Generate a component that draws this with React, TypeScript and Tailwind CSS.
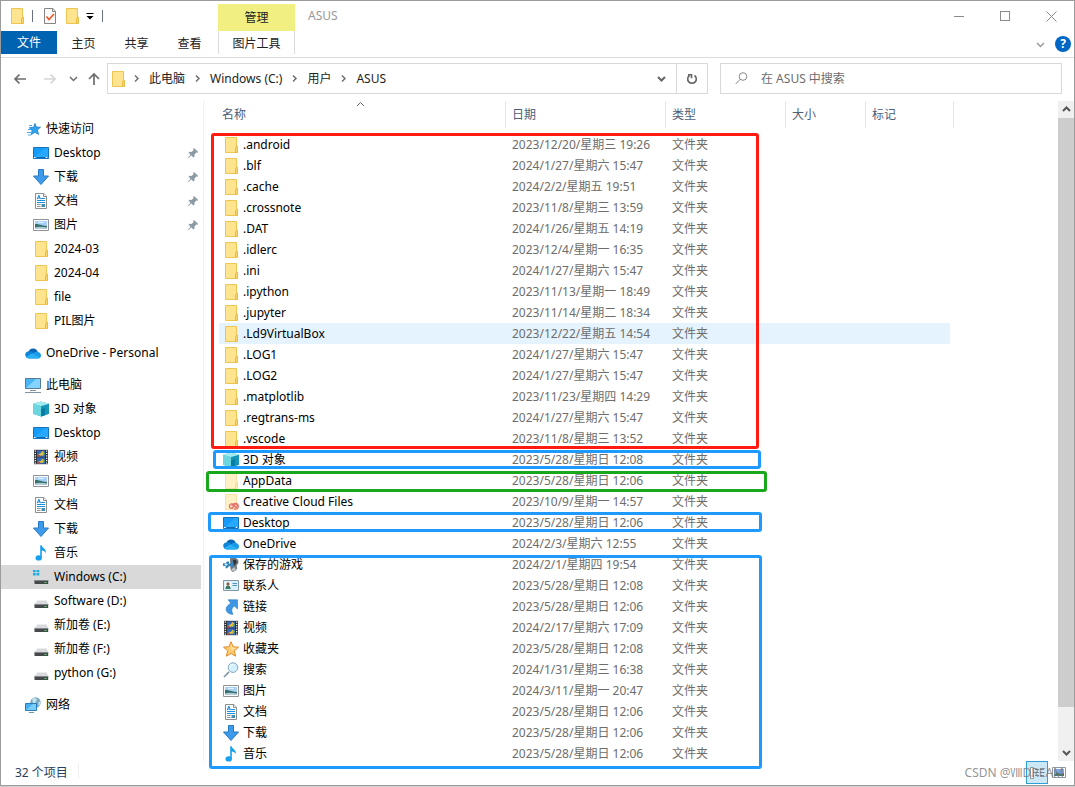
import { useState } from 'react';
import type { ReactNode } from 'react';

type IconName =
  | 'folder' | 'folderFaded' | 'creative' | 'desktop' | 'download' | 'document' | 'picture' | 'cube' | 'video'
  | 'music' | 'cloud' | 'pc' | 'network' | 'star' | 'favorite' | 'systemDrive' | 'drive' | 'games' | 'contact'
  | 'link' | 'search';

const folder = (
  <>
    <path d="M2.5.5h11v15h-11z" fill="#ffe48f" stroke="#efc552" />
    <path d="M12.5 15.5v-4.600q0-.7.7-1.100l1.300-.6v6.300z" fill="#fbd667" stroke="#e5b73f" strokeWidth=".9" />
  </>
);

const drive = (
  <>
    <path d="M4.3 7.5h9.4l1.5 3.5H1.8z" fill="#d8dadc" />
    <path d="M1.5 11h13.7v4H1.5z" fill="#46494c" />
    <path d="M1.5 11h13.7v1H1.5z" fill="#85888b" />
    <path d="M11.5 13h2v1h-2z" fill="#3be54b" />
  </>
);

const icons: Record<IconName, ReactNode> = {
  folder,
  folderFaded: <g opacity=".5">{folder}</g>,
  creative: (
    <>
      <g opacity=".5">{folder}</g>
      <path d="M8.2 14.4a2.3 2.3 0 0 1 0-4.5c2.2-.4 3.4 3.9 5.2 3.4 1.7-.5 1.3-3.4-.8-3.2-2 .2-1.9 4.3-4.4 4.3Z" fill="none" stroke="#e4716c" strokeWidth="1.4" />
      <path d="M8.7 12.2c1.2-4 6.6-3.8 6.7.2 0 2.5-2.4 3-4.5 2.5" fill="none" stroke="#e4716c" strokeWidth="1.1" />
    </>
  ),
  desktop: (
    <>
      <path d="M.5 2.5h15v11H.5z" fill="#159cf8" stroke="#1674bd" />
      <path d="m1 13 11-10h3v10z" fill="#27a9ff" />
      <path d="M1 12.5h1.5M13 12.5h1" stroke="#fff" />
      <path d="M3.5 12.5H12" stroke="#0d6bb5" />
    </>
  ),
  download: <path d="M5.5.5h5V7h5L8 15.5.5 7h5z" fill="#3d9bea" stroke="#2679c4" />,
  document: (
    <>
      <path d="M2.5.5h8.3l2.7 2.7v12.3h-11z" fill="#fff" stroke="#8b8d8f" />
      <path d="M10.5.5v3h3" fill="#eee" stroke="#8b8d8f" />
      <path d="m4.2 6.2 1.7-4 1.6 4M5 5h2" stroke="#1487da" fill="none" />
      <path d="M8 5.5h4M4 7.5h8M4 9.5h8" stroke="#1c8fe0" />
      <path d="M4 11.5h3.5M4 13.5h3.5" stroke="#8a949b" />
      <path d="M8.500 11H12v3H8.500z" fill="#3f8fb8" />
    </>
  ),
  picture: (
    <>
      <path d="M.5 2.5h15v11H.5z" fill="#fff" stroke="#909497" />
      <path d="M2 4h12v8H2z" fill="#a9d0f6" />
      <path d="M2 7c3-.5 5 1 12 2v3H2z" fill="#36716b" />
      <path d="M2 10.5c4-1.5 8-.5 12 0V12H2z" fill="#b3cbd8" />
      <path d="M5 5.5h6" stroke="#e2f1ff" />
    </>
  ),
  cube: (
    <>
      <path d="m8 .5 8 2.3v10L8 15.6 0 12.8v-10z" fill="#35bac9" />
      <path d="M0 2.8 8 5v10.6l-8-2.8z" fill="#6bd6df" />
      <path d="M8 5l8-2.200v10l-8 2.800z" fill="#1596b6" />
      <path d="M0 2.800 8 .5l8 2.300L8 5z" fill="#a5ebee" />
      <path d="M8 8.5 12 7v7.2l-4 1.4z" fill="#087ca5" />
    </>
  ),
  video: (
    <>
      <path d="M1 .8h14v14.4H1z" fill="#313438" />
      <path d="M2.3 1.5v13.3M13.7 1.5v13.3" stroke="#fff" strokeWidth="1.2" strokeDasharray="1.2 1.2" />
      <path d="M4 1.5h8v6.2H4zM4 8.5h8v6.2H4z" fill="#3568bb" />
      <path d="M5 6.8C5.5 4 9 5 9 2l2 1-.5 3.5zM5 13.8c1-2.5 4-1 4-4l2 1-.5 3z" fill="#edc23c" />
      <path d="M4 6h3v1.7H4zM4 13h3v1.7H4z" fill="#b84f43" />
      <path d="m9 4.8 3-1v1.6zM8.5 12l3.5-1v1.6z" fill="#50a653" />
    </>
  ),
  music: (
    <>
      <path d="M7.2.3h1.5c.3 2.8 4.8 3.2 4.1 7.900-.9-1.900-2.100-2.700-4-2.800v7.200H7.2z" fill="#16a0ed" />
      <ellipse cx="5.7" cy="12.9" rx="3.2" ry="2.7" fill="#16a0ed" />
    </>
  ),
  cloud: (
    <>
      <path d="M3.5 6.5A5 5 0 0 1 12.8 7L8 10.5z" fill="#0866b9" />
      <path d="M.8 11.6c-1.600-2.600.3-5.300 3.400-5.300 1.700 0 2.800.8 4.100 1.700l-6.200 5z" fill="#1085d7" />
      <path d="M8.7 7.8c2.6-2 7.3-.9 7.3 2.6 0 1.8-1.2 3-2.8 3H3.8c-1.2 0-2-.5-2.7-1.3z" fill="#199be9" />
      <path d="m1.1 12.1 6-3.5 7.7 4c-.5.5-1 .8-1.6.8H3.8c-1.2 0-2-.5-2.7-1.3z" fill="#2aaef4" />
    </>
  ),
  pc: (
    <>
      <path d="M.5 1.5h15v10H.5z" fill="#4ab5f5" stroke="#567b94" />
      <path d="m1 11 10-9h4v9z" fill="#83d2ff" />
      <path d="M5 13.5h6M0 15.500h16" stroke="#8192a0" />
    </>
  ),
  network: (
    <>
      <circle cx="10.5" cy="5.5" r="5.2" fill="#7aa9bf" />
      <path d="M7 2c3-2.4 6 .2 4.3 2.2-1.2 1-.4 2.2-2.3 2.2S8 4 7 2zM13.5 5l2-.5c.2 2-.6 3.7-2 4.8z" fill="#c3e3ec" />
      <path d="M.5 6.5h11v7H.5z" fill="#49aef0" stroke="#287cba" />
      <path d="m1 13 7-6h3v6z" fill="#7accfa" />
      <path d="M4 15.500h5" stroke="#7895a9" />
    </>
  ),
  star: (
    <>
      <path d="m10 2.500 1.300 3.600 4.200.1-3.100 2.700 1.100 4.500L10 11.300l-3.700 2.200.8-4.100-2.800-2.600 4.200-.5z" fill="#31a3ec" stroke="#1780cf" strokeWidth=".8" />
      <path d="M4 4.500h3M3 8.500h3M2 11.500h4M3 14h3" stroke="#35a4eb" strokeWidth=".9" />
    </>
  ),
  favorite: (
    <>
      <path d="m8 .7 2.1 5 5.4.5-4.1 3.6 1.2 5.4L8 12.4l-4.6 2.8 1.2-5.4L.5 6.2l5.4-.5z" fill="#ffca70" stroke="#e28b2b" />
      <path d="m8 2.5 1.4 4.1 4 .4L8 9.5z" fill="#ffe2a5" />
    </>
  ),
  systemDrive: (
    <>
      {drive}
      <path d="M0 1h2.6v2.3H0zM3.5 1h2.8v2.3H3.5zM0 4.1h2.6v2.3H0zM3.5 4.1h2.8v2.3H3.5z" fill="#18aee9" />
    </>
  ),
  drive,
  games: (
    <>
      <path d="M7 1.5C9-.3 14 .2 15 3c1.3 3-.5 4.2-1.4 5.6l.6 3-2 2.500-3 1-1.700-3z" fill="#70777d" />
      <path d="M10 3c2-1 4 .3 3.6 2.6L11 9z" fill="#2f3438" />
      <path d="M8.5 12 12 10l.8 3.3-3.3 1.2z" fill="#bdc2c5" />
      <path d="M4 4.5h2v2h2v-2h2v5.7H8.2v-1H5.8l-1.400 2H2.6V9H0V6.300h2.400z" fill="#3585bd" />
      <path d="M3 6v3M1.7 7.5h2.8" stroke="#d3edff" />
    </>
  ),
  contact: (
    <>
      <path d="M.5 2.5h15v10H.5z" fill="#d9effb" stroke="#8097a6" />
      <path d="M2 4h6v7H2z" fill="#fff" />
      <path d="M2.3 11c.2-2.400 1-3.500 2.700-3.500S7.600 8.600 7.700 11z" fill="#397a62" />
      <circle cx="5" cy="6" r="1.7" fill="#86664d" />
      <path d="M9.5 5.5H14M9.5 7.5H14" stroke="#4d94c4" />
    </>
  ),
  link: <path d="M5 .8h9.500v9.300l-3-3C8.600 9 8 11.600 10 15.300 5.800 15.500 2.400 12.600 3.200 9.300c.5-2.200 2.600-3.500 4.500-5.300z" fill="#3d96e3" stroke="#2879bd" strokeWidth=".6" />,
  search: (
    <>
      <path d="m1 15 5-5.200" stroke="#8598a6" strokeWidth="1.7" />
      <circle cx="10" cy="5.6" r="4.8" fill="#d2f0ff" stroke="#83a6bb" />
      <path d="M6.8 5.4q.5-2.6 3.2-2.9" stroke="#fff" fill="none" />
    </>
  ),
};

function Icon({ name }: { name: IconName }) {
  return (
    <svg viewBox="0 0 16 16" className="size-4 shrink-0" aria-hidden="true">
      {icons[name]}
    </svg>
  );
}

function Chevron({ className = '', d = 'm1 3 3.5 3.5L8 3' }: { className?: string; d?: string }) {
  return (
    <svg viewBox="0 0 9 9" className={`size-[9px] shrink-0 ${className}`} fill="none" stroke="currentColor" aria-hidden="true">
      <path d={d} />
    </svg>
  );
}

function Pin() {
  return (
    <svg viewBox="0 0 12 12" className="ml-auto mr-0.5 size-3 shrink-0" fill="#8b99a3" aria-hidden="true">
      <path d="m7 1 4.2 4-.8.8-1.1-.2L7.5 7.6l-.1 2.1-.9.9-2.2-2.2L.8 11.6l-.4-.4 3.2-3.5-2-2 .9-.9 2 .1L6.7 3 6.2 1.8z" />
    </svg>
  );
}

interface NavItem {
  label: string;
  icon: IconName;
  pinned?: boolean;
}

const navGroups: { root: NavItem; items: NavItem[] }[] = [
  {
    root: { label: '快速访问', icon: 'star' },
    items: [
      { label: 'Desktop', icon: 'desktop', pinned: true },
      { label: '下载', icon: 'download', pinned: true },
      { label: '文档', icon: 'document', pinned: true },
      { label: '图片', icon: 'picture', pinned: true },
      { label: '2024-03', icon: 'folder' },
      { label: '2024-04', icon: 'folder' },
      { label: 'file', icon: 'folder' },
      { label: 'PIL图片', icon: 'folder' },
    ],
  },
  { root: { label: 'OneDrive - Personal', icon: 'cloud' }, items: [] },
  {
    root: { label: '此电脑', icon: 'pc' },
    items: [
      { label: '3D 对象', icon: 'cube' },
      { label: 'Desktop', icon: 'desktop' },
      { label: '视频', icon: 'video' },
      { label: '图片', icon: 'picture' },
      { label: '文档', icon: 'document' },
      { label: '下载', icon: 'download' },
      { label: '音乐', icon: 'music' },
      { label: 'Windows (C:)', icon: 'systemDrive' },
      { label: 'Software (D:)', icon: 'drive' },
      { label: '新加卷 (E:)', icon: 'drive' },
      { label: '新加卷 (F:)', icon: 'drive' },
      { label: 'python (G:)', icon: 'drive' },
    ],
  },
  { root: { label: '网络', icon: 'network' }, items: [] },
];

const files: [string, string, IconName][] = [
  ['.android', '2023/12/20/星期三 19:26', 'folder'],
  ['.blf', '2024/1/27/星期六 15:47', 'folder'],
  ['.cache', '2024/2/2/星期五 19:51', 'folder'],
  ['.crossnote', '2023/11/8/星期三 13:59', 'folder'],
  ['.DAT', '2024/1/26/星期五 14:19', 'folder'],
  ['.idlerc', '2023/12/4/星期一 16:35', 'folder'],
  ['.ini', '2024/1/27/星期六 15:47', 'folder'],
  ['.ipython', '2023/11/13/星期一 18:49', 'folder'],
  ['.jupyter', '2023/11/14/星期二 18:34', 'folder'],
  ['.Ld9VirtualBox', '2023/12/22/星期五 14:54', 'folder'],
  ['.LOG1', '2024/1/27/星期六 15:47', 'folder'],
  ['.LOG2', '2024/1/27/星期六 15:47', 'folder'],
  ['.matplotlib', '2023/11/23/星期四 14:29', 'folder'],
  ['.regtrans-ms', '2024/1/27/星期六 15:47', 'folder'],
  ['.vscode', '2023/11/8/星期三 13:52', 'folder'],
  ['3D 对象', '2023/5/28/星期日 12:08', 'cube'],
  ['AppData', '2023/5/28/星期日 12:06', 'folderFaded'],
  ['Creative Cloud Files', '2023/10/9/星期一 14:57', 'creative'],
  ['Desktop', '2023/5/28/星期日 12:06', 'desktop'],
  ['OneDrive', '2024/2/3/星期六 12:55', 'cloud'],
  ['保存的游戏', '2024/2/1/星期四 19:54', 'games'],
  ['联系人', '2023/5/28/星期日 12:08', 'contact'],
  ['链接', '2023/5/28/星期日 12:06', 'link'],
  ['视频', '2024/2/17/星期六 17:09', 'video'],
  ['收藏夹', '2023/5/28/星期日 12:08', 'favorite'],
  ['搜索', '2024/1/31/星期三 16:38', 'search'],
  ['图片', '2024/3/11/星期一 20:47', 'picture'],
  ['文档', '2023/5/28/星期日 12:06', 'document'],
  ['下载', '2023/5/28/星期日 12:06', 'download'],
  ['音乐', '2023/5/28/星期日 12:06', 'music'],
];

const columns = [
  { label: '名称', width: 'w-[287px]', inner: 'pl-[3px] border-r' },
  { label: '日期', width: 'w-[160px]', inner: 'pl-1.5 border-r' },
  { label: '类型', width: 'w-[120px]', inner: 'pl-1.5 border-r' },
  { label: '大小', width: 'w-[80px]', inner: 'pl-1.5 border-r' },
  { label: '标记', width: 'w-[84px]', inner: 'pl-1.5' },
];

// marker frames drawn over the list
const frames = [
  'left-[7px] top-[32px] h-[316px] w-[548px] border-[#ff1b0f]',
  'left-[9px] top-[349px] h-[19px] w-[548px] border-[#1e9aff]',
  'left-[2px] top-[370px] h-[21px] w-[561px] border-[#19a81b]',
  'left-[4px] top-[411px] h-[20px] w-[554px] border-[#1e9aff]',
  'left-[5px] top-[454px] h-[214px] w-[553px] border-[#1e9aff]',
];

function Header() {
  return (
    <header className="flex h-[57px] shrink-0 border-b border-[#dadbdc]">
      <div className="flex flex-col">
        <div className="flex h-[30px] items-center pl-2">
          <Icon name="folder" />
          <span className="ml-[7px] h-3 w-px bg-gray-500" />
          <button aria-label="属性" className="ml-[9px]">
            <svg viewBox="0 0 16 16" className="size-4" aria-hidden="true">
              <path d="M2.5.5h8.3l2.7 2.7v12.3h-11z" fill="#fafafa" stroke="#858585" />
              <path d="M10.5.5v3h3" fill="none" stroke="#858585" />
              <path d="m4.5 8.5 2.5 3 5-5.5" fill="none" stroke="#ec5a24" strokeWidth="1.7" />
            </svg>
          </button>
          <button aria-label="新建文件夹" className="ml-1.5">
            <Icon name="folder" />
          </button>
          <button aria-label="自定义快速访问工具栏" className="ml-1.5">
            <svg viewBox="0 0 8 8" className="size-2" aria-hidden="true">
              <path d="M.5 1h7v1h-7zM.5 4h7L4 7.5z" />
            </svg>
          </button>
          <span className="ml-2 h-3 w-px bg-gray-500" />
        </div>
        <nav className="flex h-[23px]">
          <button className="w-14 bg-[#0063b1] text-white">文件</button>
          <button className="w-[53px] pt-0.5">主页</button>
          <button className="w-[53px] pt-0.5">共享</button>
          <button className="w-[53px] pt-0.5">查看</button>
        </nav>
      </div>
      <div className="ml-0.5 flex w-[77px] flex-col pt-[3px]">
        <div className="flex h-[27px] items-center justify-center bg-[#f1ef82]">管理</div>
        <button className="h-[23px] border-x border-[#dadbdc] pt-0.5">图片工具</button>
      </div>
      <h1 className="ml-[13px] mt-[7px] text-[#999]">ASUS</h1>
      <div className="ml-auto flex flex-col items-end">
        <div className="flex h-[30px] text-[#8a8a8a]">
          <button aria-label="最小化" className="flex w-[46px] items-center justify-center">
            <span className="h-px w-2.5 bg-current" />
          </button>
          <button aria-label="最大化" className="flex w-[46px] items-center justify-center">
            <span className="size-2.5 border border-current" />
          </button>
          <button aria-label="关闭" className="flex w-[46px] items-center justify-center">
            <svg viewBox="0 0 11 11" className="size-[11px]" stroke="currentColor" aria-hidden="true">
              <path d="m.5.5 10 10M10.5.5l-10 10" />
            </svg>
          </button>
        </div>
        <div className="flex h-[26px] items-center gap-2.5 pr-[3px] text-[#9a9a9a]">
          <button aria-label="展开功能区">
            <Chevron className="stroke-[1.5]" />
          </button>
          <button aria-label="帮助" className="size-4 rounded-full bg-[#0067c5] text-[12px] font-bold leading-4 text-white">
            ?
          </button>
        </div>
      </div>
    </header>
  );
}

function AddressBar() {
  return (
    <div className="flex h-[43px] shrink-0 items-start px-3 pt-[5px]">
      <div className="flex h-[31px] w-[94px] shrink-0 items-center text-[#6d6d6d]">
        <button aria-label="后退">
          <svg viewBox="0 0 14 12" className="h-3 w-3.5" fill="none" stroke="currentColor" strokeWidth="1.7" aria-hidden="true">
            <path d="M13 6H2M6.5 1.5 2 6l4.5 4.5" />
          </svg>
        </button>
        <button aria-label="前进" className="ml-4 text-[#d5d5d5]">
          <svg viewBox="0 0 14 12" className="h-3 w-3.5" fill="none" stroke="currentColor" strokeWidth="1.7" aria-hidden="true">
            <path d="M1 6h11M7.5 1.5 12 6l-4.5 4.5" />
          </svg>
        </button>
        <button aria-label="最近浏览的位置" className="ml-3">
          <Chevron className="stroke-[1.5]" />
        </button>
        <button aria-label="上移" className="ml-2.5">
          <svg viewBox="0 0 12 14" className="h-3.5 w-3" fill="none" stroke="currentColor" strokeWidth="1.7" aria-hidden="true">
            <path d="M6 13V2M1 7l5-5 5 5" />
          </svg>
        </button>
      </div>
      <div className="flex h-[31px] flex-[601_1_601px] border border-[#d9d9d9]">
        <div className="flex flex-1 items-center pl-0.5">
          <span className="w-3.5">
            <Icon name="folder" />
          </span>
          {['此电脑', 'Windows (C:)', '用户', 'ASUS'].map((crumb) => (
            <span key={crumb} className="flex items-center">
              <Chevron d="m3 1.5 3 3-3 3" className="mx-2 stroke-[1.5] text-[#707070]" />
              <button>{crumb}</button>
            </span>
          ))}
        </div>
        <button aria-label="以前的位置" className="flex w-[29px] items-center justify-center text-[#666]">
          <Chevron className="stroke-2" />
        </button>
        <button aria-label="刷新" className="flex w-[31px] items-center justify-center border-l border-[#d9d9d9]">
          <svg viewBox="0 0 12 12" className="size-3" fill="none" stroke="#666" strokeWidth="1.6" aria-hidden="true">
            <path d="M8.5 2.5a4.3 4.3 0 1 1-5 0M2 1.800h3.500v3.500" />
          </svg>
        </button>
      </div>
      <label className="ml-3 flex h-[31px] flex-[342_1_342px] items-center border border-[#d9d9d9] pl-3.5">
        <svg viewBox="0 0 13 13" className="size-[13px] shrink-0" fill="none" stroke="#8a8a8a" aria-hidden="true">
          <circle cx="8" cy="4.5" r="3.8" />
          <path d="M5.3 7.2.7 12" />
        </svg>
        <input
          type="search"
          aria-label="在 ASUS 中搜索"
          placeholder="在 ASUS 中搜索"
          className="ml-[13px] w-full min-w-0 outline-none placeholder:text-[#6d6d6d]"
        />
      </label>
    </div>
  );
}

function Sidebar() {
  const [current, setCurrent] = useState('Windows (C:)');

  return (
    <aside className="mb-[3px] flex w-[203px] shrink-0 flex-col gap-2 border-r border-[#f0f0f0] pt-4 text-black">
      {navGroups.map(({ root, items }) => (
        <div key={root.label}>
          <button className="flex h-6 w-full items-center gap-[5px] pl-6">
            <Icon name={root.icon} />
            {root.label}
          </button>
          {items.map((item) => (
            <button
              key={item.label}
              onClick={() => setCurrent(item.label)}
              className={`flex h-6 w-[200px] items-center gap-[5px] pl-8 ${current === item.label ? 'bg-[#d9d9d9]' : ''}`}
            >
              <Icon name={item.icon} />
              {item.label}
              {item.pinned && <Pin />}
            </button>
          ))}
        </div>
      ))}
    </aside>
  );
}

function FileList() {
  const [hovered, setHovered] = useState('.Ld9VirtualBox');

  return (
    <main className="relative min-w-0 flex-1 pl-[15px]">
      <table className="w-[735px] table-fixed border-collapse text-left">
        <thead>
          <tr className="h-[33px] align-top text-[#4c607a]">
            {columns.map((col, i) => (
              <th key={col.label} scope="col" className={`p-0 font-normal ${col.width}`}>
                <div className={`relative flex h-[27px] items-center border-[#e5e5e5] ${col.inner}`}>
                  {col.label}
                  {i === 0 && <Chevron d="M1 5l3.5-3.5L8 5" className="absolute left-[137px] top-0 text-[#666]" />}
                </div>
              </th>
            ))}
            <td className="w-1 p-0">
              <div className="h-[27px] border-r border-[#e5e5e5]" />
            </td>
          </tr>
        </thead>
        <tbody>
          {files.map(([name, date, icon]) => (
            <tr
              key={name}
              onMouseEnter={() => setHovered(name)}
              className={`h-[21px] text-[#6d6d6d] ${hovered === name ? 'bg-[#e5f3ff]' : ''}`}
            >
              <td className="p-0">
                <div className="flex h-[21px] items-center gap-1 pl-1 text-black">
                  <Icon name={icon} />
                  {name}
                </div>
              </td>
              <td className="p-0 pl-1.5">{date}</td>
              <td className="p-0 pl-1.5">文件夹</td>
              <td />
              <td />
            </tr>
          ))}
        </tbody>
      </table>
      {frames.map((frame) => (
        <div key={frame} className={`pointer-events-none absolute rounded-[3px] border-3 ${frame}`} />
      ))}
    </main>
  );
}

function Scrollbar() {
  return (
    <div className="mb-[3px] flex w-4 shrink-0 flex-col bg-[#f0f0f0] text-[#555]">
      <button aria-label="向上滚动" className="flex h-[17px] items-center justify-center">
        <Chevron d="M1 6l3.5-3.5L8 6" className="stroke-2" />
      </button>
      <div className="flex-[589] bg-[#cdcdcd]" />
      <div className="flex-[37]" />
      <button aria-label="向下滚动" className="flex h-[17px] items-center justify-center">
        <Chevron className="stroke-2" />
      </button>
    </div>
  );
}

function StatusBar() {
  return (
    <footer className="relative flex h-[21px] shrink-0 items-start pl-3.5 text-[#26405e]">
      <span className="pt-px">32 个项目</span>
      <span className="ml-2.5 h-3.5 w-px bg-[#eee]" />
      <div className="-mt-[3px] ml-auto flex pr-1">
        <button aria-label="详细信息" className="flex h-[23px] w-[22px] items-center justify-center border border-[#2f9fd8] bg-[#cce8f7]">
          <svg viewBox="0 0 16 12" className="h-3 w-4" fill="none" aria-hidden="true">
            <path d="M1.5.5h3v11h-3z" fill="#fff" stroke="#8c989f" />
            <path d="M6 2.5h4M11 2.5h4M6 5.5h4M11 5.5h4M6 8.5h4M11 8.5h4" stroke="#788894" />
            <path d="M2.5 8.5h1v1h-1z" fill="#e23c32" />
          </svg>
        </button>
        <button aria-label="大缩略图" className="flex h-[23px] w-[22px] items-center justify-center">
          <svg viewBox="0 0 14 11" className="h-[11px] w-3.5" aria-hidden="true">
            <path d="M.5.5h13v10H.5z" fill="#fff" stroke="#8c989f" />
            <path d="M2 2h10v7H2z" fill="#79a9e8" />
            <path d="m2 9 3-4 3 2 4-1v3z" fill="#4a7268" />
          </svg>
        </button>
      </div>
      <span className="pointer-events-none absolute right-2.5 top-px text-[#777]/80">CSDN @ⅧDREAM</span>
    </footer>
  );
}

export default function App() {
  return (
    <div className="flex min-h-screen flex-col bg-[#cfcfcf] pb-0.5 font-['Noto_Sans','Noto_Sans_CJK_SC',sans-serif] text-[12px] leading-4 text-[#222]">
      <div className="flex flex-1 flex-col border border-[#9b9b9b] bg-white">
        <Header />
        <AddressBar />
        <div className="flex flex-1">
          <Sidebar />
          <FileList />
          <Scrollbar />
        </div>
        <StatusBar />
      </div>
    </div>
  );
}
